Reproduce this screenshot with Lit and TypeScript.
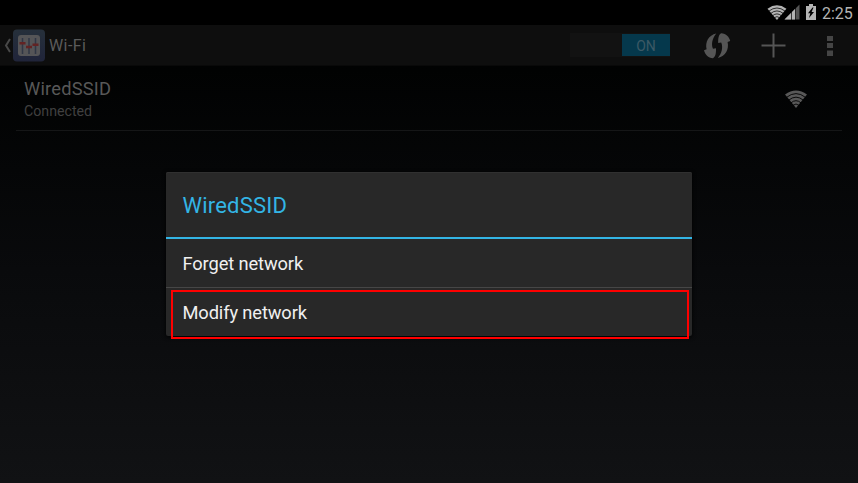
import { LitElement, html, css, svg } from "lit";
import { customElement } from "lit/decorators.js";

const wifi = svg`
  <path d="M0 4.6 Q11 -3.8 22 4.6 L11 18 Z" fill="currentColor"/>
  <g fill="none" stroke="var(--gap)" stroke-width=".9">
    <path d="M1.500 7.4 Q11 -.2 20.500 7.4"/>
    <path d="M3.500 10.3 Q11 4 18.500 10.3"/>
    <path d="M5.800 13 Q11 8.4 16.200 13"/>
    <path d="M8 15.300 Q11 12.700 14 15.300"/>
  </g>`;

const arrow = "M46.300 8.400 C38.500 10 35 17 36.600 24.300 L34 25.300 C35 29.500 38 33 43 33.200 C45.400 32 46.200 28.500 46 23.300 L43 23.800 C41 19 42.300 13 46.300 8.400 Z";

@customElement("app-root")
export class AppRoot extends LitElement {
  static styles = css`
    :host {
      display: flex;
      flex-direction: column;
      position: relative;
      width: 858px;
      height: 483px;
      overflow: hidden;
      box-sizing: border-box;
      background: linear-gradient(#000 0, #010202 70px, #090a0c 270px, #111214 483px);
      font-family: Roboto, "Liberation Sans", sans-serif;
      color: #585858;
      white-space: nowrap;
    }
    svg { display: block; flex: none; }
    .status {
      height: 25px;
      flex: none;
      background: #000;
      display: flex;
      align-items: center;
      justify-content: flex-end;
      padding-right: 6px;
      box-sizing: border-box;
      color: #b4b4b4;
      --gap: #000;
    }
    .clock { font-size: 16px; line-height: 25px; width: 30px; margin-left: 5px; padding-top: 2px; }
    .bar {
      height: 41px;
      flex: none;
      background: #0e0e0e;
      border-bottom: 1px solid #090909;
      box-sizing: border-box;
      display: flex;
      align-items: center;
    }
    .title { font-size: 16px; letter-spacing: .4px; margin-left: 4px; flex: 1; color: #5b5b5b; }
    .switch {
      width: 100px;
      height: 24px;
      background: #121212;
      display: flex;
      justify-content: flex-end;
      box-sizing: border-box;
      padding: 1px 0 1px;
    }
    .thumb {
      width: 48px;
      background: #05384c;
      color: #3c5965;
      font-size: 14px;
      line-height: 25px;
      text-align: center;
      height: 22px;
    }
    .row {
      display: flex;
      align-items: center;
      justify-content: space-between;
      margin: 0 16px;
      height: 65px;
      box-sizing: border-box;
      padding: 0 35px 0 8px;
      border-bottom: 1px solid #151617;
      --gap: #000;
    }
    .row svg { margin-top: 1px; }
    .ssid { font-size: 18.3px; letter-spacing: .2px; line-height: 22px; margin-top: 2px; }
    .state { font-size: 14.2px; line-height: 20px; color: #404040; margin-top: 1px; }
    .dialog {
      position: absolute;
      left: 166px;
      top: 172px;
      width: 526px;
      height: 164px;
      background: #282828;
      border-radius: 2px;
      box-shadow: 0 1px 4px #000, inset 0 1px #303030;
      color: #f0f0f0;
      box-sizing: border-box;
    }
    .head {
      height: 67px;
      box-sizing: border-box;
      border-bottom: 2px solid #33b5e5;
      color: #33b5e5;
      font-size: 22px;
      letter-spacing: .2px;
      line-height: 67px;
      padding-left: 16.5px;
    }
    .item {
      height: 49px;
      box-sizing: border-box;
      border-bottom: 1px solid #464646;
      font-size: 18.3px;
      letter-spacing: -.12px;
      line-height: 50px;
      padding-left: 16.5px;
    }
    .item.last { border: 0; height: 48px; line-height: 49px; }
    .mark {
      position: absolute;
      left: 171px;
      top: 290px;
      width: 518px;
      height: 49px;
      box-sizing: border-box;
      border: 2px solid #f00;
    }
  `;

  render() {
    return html`
      <div class="status">
        <svg width="53" height="25" viewBox="0 0 53 25">
          <path d="M20.500 19.500 L35.500 4.500 V19.500 Z" fill="#555"/>
          <path d="M20.500 19.500 L31.500 8.500 V19.500 Z" fill="currentColor"/>
          <path d="M27.500 6V20M31.500 6V20" stroke="#000" stroke-width=".7"/>
          <g transform="translate(3.500 5) scale(.86 .83)">${wifi}</g>
          <path d="M42 6 H45 V4 H49 V6 H52 V20 H42 Z" fill="currentColor"/>
          <path d="M48.500 7.500 L44 13.300 H46.300 L45 18 L50 12 H47.600 L49.500 7.500 Z" fill="#000"/>
        </svg>
        <span class="clock">2:25</span>
      </div>
      <div class="bar">
        <svg width="45" height="40" viewBox="0 0 45 40">
          <path d="M10 14 L6 20.500 L10 27" fill="none" stroke="#484848" stroke-width="2"/>
          <defs>
            <linearGradient id="g" x2="0" y2="1">
              <stop stop-color="#26303b"/><stop offset="1" stop-color="#20243a"/>
            </linearGradient>
          </defs>
          <rect x="13" y="4.500" width="32" height="32" rx="4" fill="url(#g)"/>
          <rect x="18" y="10" width="22" height="21" rx="3" fill="#555557"/>
          <path d="M22.500 13V29M29 13V29M35.500 13V29" stroke="#303745" stroke-width="1.500"/>
          <path d="M19.500 18.300H25.500M26 22H32M32.500 19.700H38.500" stroke="#622323" stroke-width="2.400"/>
        </svg>
        <span class="title">Wi-Fi</span>
        <div class="switch"><div class="thumb">ON</div></div>
        <svg width="188" height="40" viewBox="0 0 188 40">
          <g fill="#555">
            <path d=${arrow} />
            <path d=${arrow} transform="rotate(180 47.100 20.700)"/>
          </g>
          <path d="M91.500 20.500H115.500M103.500 8.500V32.500" stroke="#555" stroke-width="2"/>
          <path d="M157 11H163V16H157ZM157 18H163V23H157ZM157 25.500H163V31H157Z" fill="#454545"/>
        </svg>
      </div>
      <div class="row">
        <div>
          <div class="ssid">WiredSSID</div>
          <div class="state">Connected</div>
        </div>
        <svg width="22" height="18" viewBox="0 0 22 18">${wifi}</svg>
      </div>
      <div class="dialog">
        <div class="head">WiredSSID</div>
        <div class="item">Forget network</div>
        <div class="item last">Modify network</div>
      </div>
      <div class="mark"></div>
    `;
  }
}
